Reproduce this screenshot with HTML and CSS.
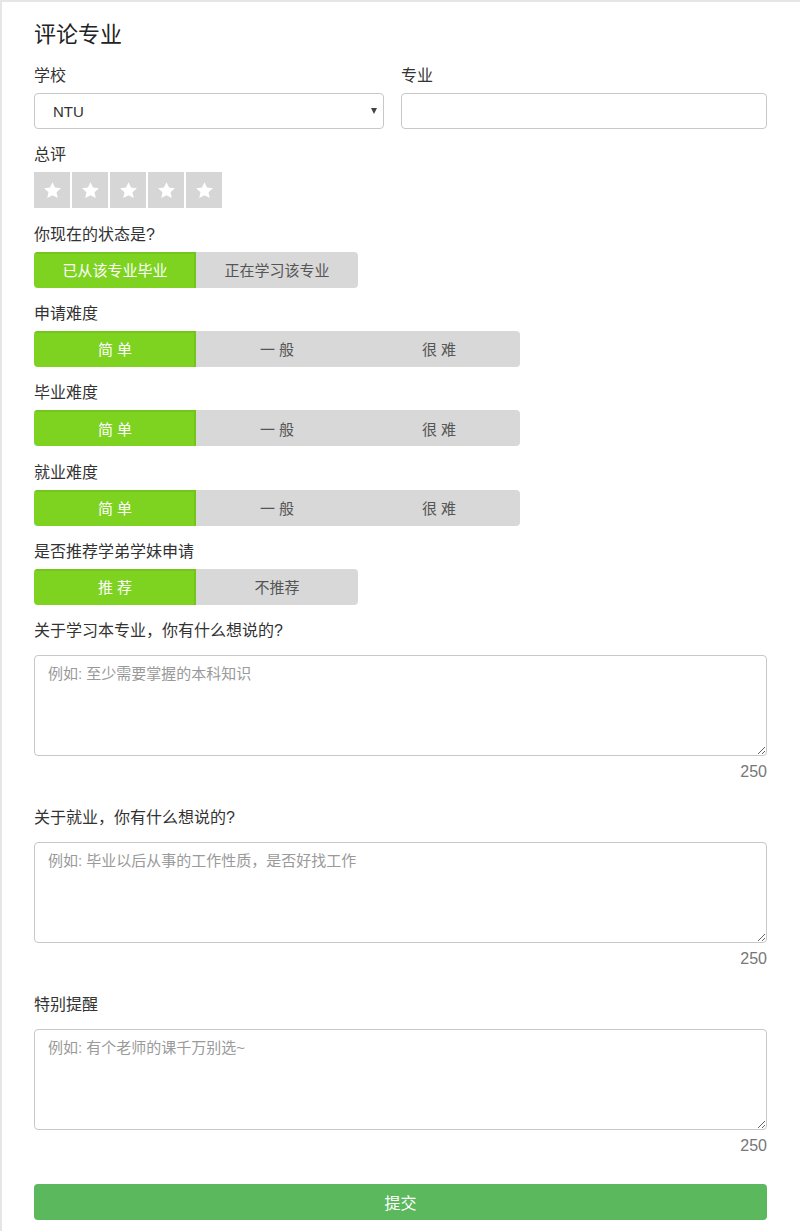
FILE: index.html
```html
<!DOCTYPE html>
<html lang="zh-CN">
<head>
<meta charset="utf-8">
<title>评论专业</title>
<link rel="stylesheet" href="styles.css">
</head>
<body>
<div class="page">
  <h1 class="title">评论专业</h1>

  <div class="row2">
    <div class="group">
      <label class="label">学校</label>
      <div class="select-wrap">
        <select class="select"><option>NTU</option></select>
      </div>
    </div>
    <div class="group">
      <label class="label">专业</label>
      <input class="input" type="text">
    </div>
  </div>

  <div class="group">
    <label class="label">总评</label>
    <div class="stars">
      <span class="star"><svg viewBox="0 0 24 24" width="21" height="21"><path d="M12 2.5l2.9 6.2 6.7.7-5 4.6 1.4 6.7L12 17.3l-6 3.4 1.4-6.7-5-4.6 6.7-.7z" fill="#fff"/></svg></span>
      <span class="star"><svg viewBox="0 0 24 24" width="21" height="21"><path d="M12 2.5l2.9 6.2 6.7.7-5 4.6 1.4 6.7L12 17.3l-6 3.4 1.4-6.7-5-4.6 6.7-.7z" fill="#fff"/></svg></span>
      <span class="star"><svg viewBox="0 0 24 24" width="21" height="21"><path d="M12 2.5l2.9 6.2 6.7.7-5 4.6 1.4 6.7L12 17.3l-6 3.4 1.4-6.7-5-4.6 6.7-.7z" fill="#fff"/></svg></span>
      <span class="star"><svg viewBox="0 0 24 24" width="21" height="21"><path d="M12 2.5l2.9 6.2 6.7.7-5 4.6 1.4 6.7L12 17.3l-6 3.4 1.4-6.7-5-4.6 6.7-.7z" fill="#fff"/></svg></span>
      <span class="star"><svg viewBox="0 0 24 24" width="21" height="21"><path d="M12 2.5l2.9 6.2 6.7.7-5 4.6 1.4 6.7L12 17.3l-6 3.4 1.4-6.7-5-4.6 6.7-.7z" fill="#fff"/></svg></span>
    </div>
  </div>

  <div class="group">
    <label class="label">你现在的状态是?</label>
    <div class="toggle">
      <span class="opt active">已从该专业毕业</span>
      <span class="opt">正在学习该专业</span>
    </div>
  </div>

  <div class="group">
    <label class="label">申请难度</label>
    <div class="toggle">
      <span class="opt active">简 单</span>
      <span class="opt">一 般</span>
      <span class="opt">很 难</span>
    </div>
  </div>

  <div class="group">
    <label class="label">毕业难度</label>
    <div class="toggle">
      <span class="opt active">简 单</span>
      <span class="opt">一 般</span>
      <span class="opt">很 难</span>
    </div>
  </div>

  <div class="group">
    <label class="label">就业难度</label>
    <div class="toggle">
      <span class="opt active">简 单</span>
      <span class="opt">一 般</span>
      <span class="opt">很 难</span>
    </div>
  </div>

  <div class="group">
    <label class="label">是否推荐学弟学妹申请</label>
    <div class="toggle">
      <span class="opt active">推 荐</span>
      <span class="opt">不推荐</span>
    </div>
  </div>

  <div class="tgroup">
    <label class="label">关于学习本专业，你有什么想说的?</label>
    <textarea class="textarea" placeholder="例如: 至少需要掌握的本科知识"></textarea>
    <div class="count">250</div>
  </div>

  <div class="tgroup">
    <label class="label">关于就业，你有什么想说的?</label>
    <textarea class="textarea" placeholder="例如: 毕业以后从事的工作性质，是否好找工作"></textarea>
    <div class="count">250</div>
  </div>

  <div class="tgroup">
    <label class="label">特别提醒</label>
    <textarea class="textarea" placeholder="例如: 有个老师的课千万别选~"></textarea>
    <div class="count">250</div>
  </div>

  <button class="submit" type="button">提交</button>
</div>
</body>
</html>
```

FILE: styles.css
```css
* { box-sizing: border-box; }

html, body {
  margin: 0;
  padding: 0;
  background: #fff;
}

body {
  border-top: 2px solid #e6e6e6;
  border-left: 2px solid #e6e6e6;
  min-height: 1231px;
  font-family: "Liberation Sans", "Noto Sans CJK SC", sans-serif;
  color: #333;
}

.page {
  padding: 0 33px 0 32px;
  display: flex;
  flex-direction: column;
}

.title {
  margin: 21px 0 18px;
  font-size: 22px;
  line-height: 24px;
  height: 24px;
  font-weight: normal;
  color: #222;
}

.row2 {
  display: grid;
  grid-template-columns: 350px 1fr;
  column-gap: 17px;
}

.group {
  display: flex;
  flex-direction: column;
  margin-bottom: 15.33px;
}

.label {
  display: block;
  font-size: 16px;
  line-height: 22px;
  height: 22px;
  margin-bottom: 6px;
  color: #333;
  white-space: nowrap;
}

.select-wrap {
  position: relative;
}

.select-wrap::after {
  content: "";
  position: absolute;
  right: 7px;
  top: 15px;
  border-left: 3.5px solid transparent;
  border-right: 3.5px solid transparent;
  border-top: 6px solid #444;
  pointer-events: none;
}

.select {
  appearance: none;
  -webkit-appearance: none;
  width: 100%;
  height: 36px;
  border: 1px solid #c8c8c8;
  border-radius: 4px;
  background: #fff;
  padding: 0 0 0 18px;
  font-family: "Liberation Sans", "Noto Sans CJK SC", sans-serif;
  font-size: 15px;
  color: #333;
  outline: none;
}

.input {
  width: 100%;
  height: 36px;
  border: 1px solid #c8c8c8;
  border-radius: 4px;
  background: #fff;
  outline: none;
}

.stars {
  display: flex;
  gap: 2px;
}

.star {
  width: 36px;
  height: 36px;
  background: #d6d6d6;
  display: flex;
  align-items: center;
  justify-content: center;
}

.toggle {
  display: flex;
  border-radius: 4px;
  overflow: hidden;
  align-self: flex-start;
}

.opt {
  width: 162px;
  height: 36px;
  display: flex;
  align-items: center;
  justify-content: center;
  background: #d8d8d8;
  color: #555;
  font-size: 15px;
  white-space: pre;
}

.opt.active {
  background: #7ed321;
  color: #fff;
  box-shadow: inset -2px 0 0 #73c51c, inset 0 2px 0 #74c61d;
}

.tgroup {
  display: flex;
  flex-direction: column;
  margin-bottom: 25.33px;
}

.tgroup .label {
  margin-bottom: 12.67px;
}

.textarea {
  width: 100%;
  height: 101px;
  border: 1px solid #c8c8c8;
  border-radius: 4px;
  padding: 8px 13px;
  font-family: "Liberation Sans", "Noto Sans CJK SC", sans-serif;
  font-size: 15px;
  line-height: 20px;
  color: #333;
  resize: vertical;
  outline: none;
  display: block;
}

.textarea::placeholder {
  color: #9a9a9a;
}

.count {
  margin-top: 6px;
  text-align: right;
  font-size: 16px;
  line-height: 20px;
  height: 20px;
  color: #777;
}

.submit {
  margin-top: 2.67px;
  height: 36px;
  width: 100%;
  border: none;
  border-radius: 4px;
  background: #5cb85c;
  color: #fff;
  font-family: "Liberation Sans", "Noto Sans CJK SC", sans-serif;
  font-size: 16px;
}
```
